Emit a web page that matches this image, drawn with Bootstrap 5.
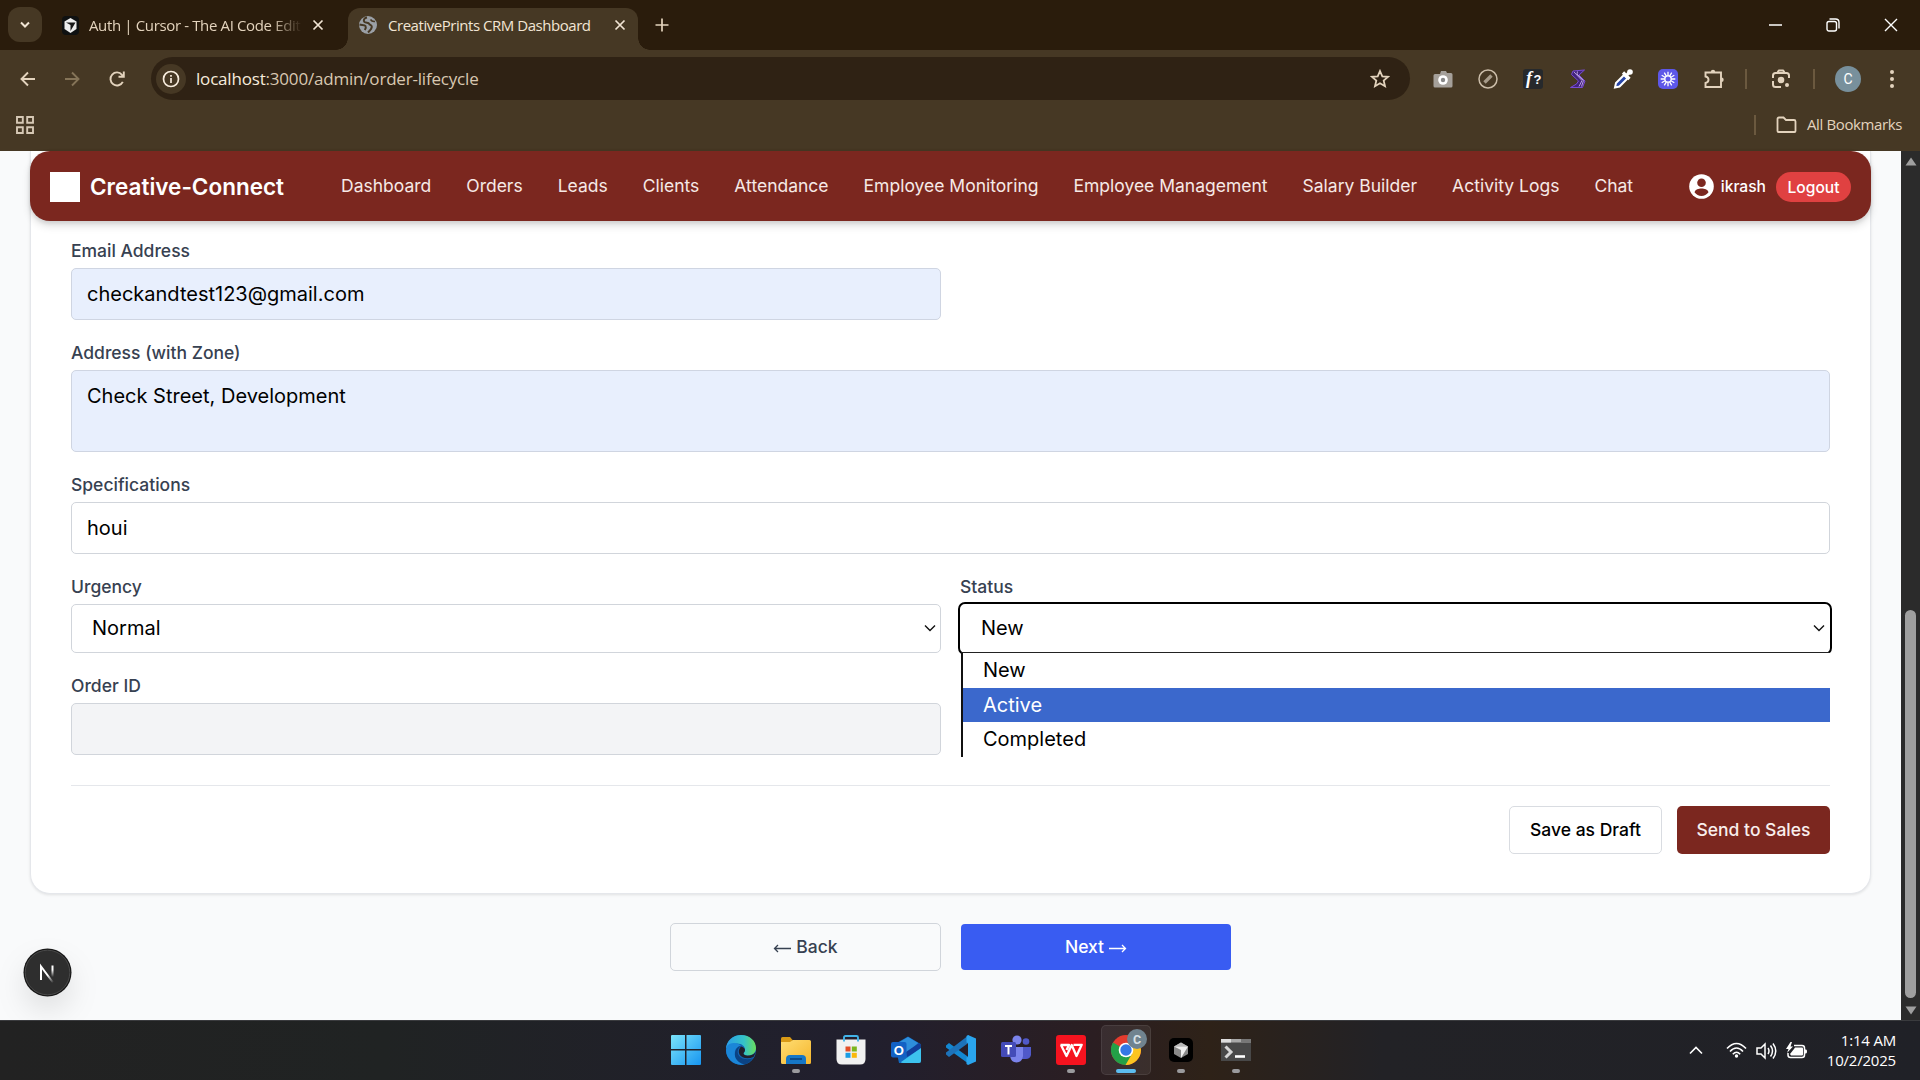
<!DOCTYPE html>
<html lang="en">
<head>
<meta charset="utf-8">
<title>CreativePrints CRM Dashboard</title>
<link href="https://cdn.jsdelivr.net/npm/bootstrap@5.3.0/dist/css/bootstrap.min.css" rel="stylesheet">
<style>
html,body{height:100%}
body{width:1920px;height:1080px;overflow:hidden;font-family:Inter,sans-serif;background:#f9fafb;color:#000}
svg{display:block;flex:none}
.chrome{height:151px;background:#463824;font-family:"Open Sans",sans-serif;color:#e3d3bd;flex:none}
.tabstrip{height:50px;background:#2a1c0c;padding-left:8px}
.tabsearch{width:34px;height:35px;border-radius:12px;background:#463824;margin-top:7px}
.tab-idle{width:289px;height:50px;padding-left:20px;font-size:15px;letter-spacing:-.36px}
.tab-idle .ttl{margin-left:10px;width:222px;white-space:nowrap;-webkit-mask-image:linear-gradient(90deg,#000 82%,transparent 96%)}
.tab-live{width:290px;height:42px;margin-top:8px;margin-left:17px;padding-bottom:8px;padding-left:10px;background:#463824;border-radius:12px 12px 0 0;position:relative;font-size:15px;letter-spacing:-.46px;color:#f2e5d4}
.tab-live .ttl{margin-left:10px;width:221px;white-space:nowrap}
.tab-live:before,.tab-live:after{content:"";position:absolute;bottom:0;width:12px;height:12px}
.tab-live:before{left:-12px;background:radial-gradient(circle at 0 0,transparent 11.5px,#463824 12px)}
.tab-live:after{right:-12px;background:radial-gradient(circle at 100% 0,transparent 11.5px,#463824 12px)}
.toolbar-row{height:57px}
.omni{width:1259px;height:43px;border-radius:22px;background:#2f2214;font-size:17px;padding-left:5px}
.omni .info{width:30px;height:30px;border-radius:50%;background:#463824}
.omni .url{margin-left:10px;letter-spacing:-.19px;color:#d9c8b1}
.omni b{font-weight:400;color:#f7ecdd}
.vsep{width:2px;height:20px;background:#6b593f}
.avatar-c{width:26px;height:26px;border-radius:50%;background:#78909c;color:#fff;font:14px Roboto,sans-serif;line-height:26px;text-align:center}
.bookmarks-txt{font-size:15px;letter-spacing:-.38px;margin-left:10px;width:113px;margin-top:-1px}
.viewport{height:869px;position:relative}
.page-col{width:1901px;background:#f9fafb}
.sheet{width:1841px;margin-left:30px;height:743px;background:#fff;border:1px solid #e5e7eb;border-top:0;border-radius:0 0 20px 20px;box-shadow:0 1px 3px rgba(0,0,0,.1)}
.topnav{height:70px;margin:0 -1px;background:#7b271f;border-radius:20px;box-shadow:0 5px 8px rgba(0,0,0,.12),0 2px 4px rgba(0,0,0,.1);padding:1px 20px 0;font-size:17.5px;font-weight:400;color:#f6e9e6;white-space:nowrap}
.logo-sq{width:30px;height:30px;background:#fff}
.brandname{font-size:22.5px;font-weight:600;color:#fff;width:251px;margin-left:10px}
.links{gap:35px}
.who{font-size:15.6px;font-weight:500;color:#fff}
.logout{background:#e04141;color:#fff;font-size:15.6px;font-weight:500;height:30px;width:75px;border-radius:15px;line-height:31px;text-align:center}
.formbody{padding:17px 40px 0 40px}
.lbl{font-size:17.5px;font-weight:500;line-height:25px;height:25px;margin-bottom:5px;color:#374151}
.fld{border:1px solid #d1d5db;border-radius:5px;height:52px;padding:0 15px;font-size:20px;display:flex;align-items:center;background:#fff}
.fld.auto{background:#e8effd;border-color:#cfd5e2}
.half{width:870px}
.sel{height:49px;padding-left:20px;padding-right:4px;padding-bottom:1px;justify-content:space-between}
.sel.on{outline:2.5px solid #000;outline-offset:0;border-color:#fff}
.menu-pop{position:absolute;left:961px;top:652px;width:869px;z-index:5;background:#fff;border-left:2px solid #111;border-top:1px solid #222;font-size:20px}
.menu-pop div{height:34.5px;line-height:35.5px;padding-left:20px}
.menu-pop .hot{background:#3b68cc;color:#fff}
.rule{height:1px;background:#e5e7eb;margin-top:30px}
.bt{height:48px;border-radius:5px;font-size:17.5px;font-weight:500;display:flex;align-items:center;justify-content:center;padding-top:1px}
.bt-draft{width:153px;border:1px solid #d9dce1;background:#fff;font-weight:450}
.bt-send{width:153px;background:#7b271f;color:#f8eeec;font-weight:450}
.bt-back{width:271px;border:1px solid #d1d5db;color:#374151}
.bt-next{width:270px;height:46px;background:#395cf2;color:#fff;border-radius:4px}
.scrollcol{width:19px;background:#2b2b2b}
.thumb{width:11px;height:388px;border-radius:6px;background:#9f9f9f}
.nbadge{position:absolute;left:23px;top:797px;filter:drop-shadow(0 14px 14px rgba(0,0,0,.1))}
.taskbar{height:60px;background:linear-gradient(90deg,#222 0,#202323 20%,#211f2e 45%,#2b1e22 57%,#2e2218 63%,#222226 72%,#202127);border-top:1px solid #3a3b3e;color:#fff;padding-left:658px;position:relative}
.tk{width:55px;height:59px;position:relative;display:flex;justify-content:center;padding-top:14px}
.tk .run{position:absolute;top:48px;width:8px;height:4px;border-radius:2px;background:#9a9a9d}
.tk.act:before{content:"";position:absolute;left:2.5px;top:4px;width:50px;height:50px;border-radius:5px;background:rgba(255,255,255,.07);border:1px solid rgba(255,255,255,.08)}
.tk.act .run{width:20px;background:#5cbdf0}
.tray{margin-left:auto;padding-right:24px;font-family:"Open Sans",sans-serif}
.clock{font-size:15px;line-height:20px;text-align:right;width:72px;letter-spacing:-.2px;white-space:nowrap;margin-top:-2px;margin-left:17px}
</style>
</head>
<body class="d-flex flex-column">
<header class="chrome">
  <div class="tabstrip d-flex">
    <div class="tabsearch d-flex align-items-center justify-content-center"><svg width="12" height="12" fill="none" stroke="#f2e5d4" stroke-width="2"><path d="M2 3.500l4 4 4-4"/></svg></div>
    <div class="tab-idle d-flex align-items-center">
      <svg width="17" height="19" viewBox="0 0 17 19"><rect width="17" height="19" rx="4" fill="#0f1112"/><path d="M8.500 2L14.500 5.500v7.500L8.500 17 2.500 13V5.500z" fill="#eee"/><path d="M4 6.500h9.500L8.500 15V9z" fill="#181818"/></svg>
      <span class="ttl">Auth | Cursor - The AI Code Edit</span>
      <svg width="14" height="14" stroke="#f2e5d4" stroke-width="1.700"><path d="M2.500 2.500l9 9m0-9l-9 9"/></svg>
    </div>
    <div class="tab-live d-flex align-items-center">
      <svg width="20" height="20" viewBox="0 0 20 20"><circle cx="10" cy="10" r="9" fill="#9ba0a6"/><path d="M9 2.500C6 3 5 5.500 6.500 7c1.500 1.200 4 .3 4.700 1.800.5 1.400 2.600 1 2.600 3 0 2.200-2.300 4.200-3.800 5.700M1.500 9.500c2 .8 5 0 6 1.500.6 1 .3 2.500-.7 4" fill="none" stroke="#463824" stroke-width="2"/><path d="M12.500 4.500q1.500 2.500 4.500 2" stroke="#463824" stroke-width="1.500" fill="none"/></svg>
      <span class="ttl">CreativePrints CRM Dashboard</span>
      <svg class="ms-1" width="14" height="14" stroke="#f2e5d4" stroke-width="1.700"><path d="M2.500 2.500l9 9m0-9l-9 9"/></svg>
    </div>
    <svg style="margin:17px 0 0 16px" width="16" height="16" stroke="#e3d3bd" stroke-width="1.700"><path d="M8 1.500v13M1.500 8h13"/></svg>
    <div class="d-flex align-items-center ms-auto" style="gap:44px;height:50px;padding-right:22px">
      <svg width="13" height="14" stroke="#fff" stroke-width="1.500"><path d="M0 7h13"/></svg>
      <svg width="14" height="14" viewBox="0 0 14 14" fill="none" stroke="#fff" stroke-width="1.400"><rect x="1" y="3.500" width="9.500" height="9.500" rx="2"/><path d="M3.500 1h6q3.500 0 3.500 3.500v6"/></svg>
      <svg width="14" height="14" stroke="#fff" stroke-width="1.400"><path d="M1 1l12 12m0-12L1 13"/></svg>
    </div>
  </div>
  <div class="toolbar-row d-flex align-items-center">
    <svg style="margin-left:20px" width="15" height="16" fill="none" stroke="#e3d3bd" stroke-width="1.900"><path d="M15 8H1.500M8 1.500L1.500 8 8 14.500"/></svg>
    <svg style="margin-left:30px" width="15" height="16" fill="none" stroke="#857458" stroke-width="1.900"><path d="M0 8h13.500M7 1.500L13.500 8 7 14.500"/></svg>
    <svg style="margin-left:28px" width="18" height="18" viewBox="0 0 18 18" fill="none" stroke="#e3d3bd" stroke-width="1.900"><path d="M14.800 11.800A6.500 6.500 0 1 1 14 4.800L15.500 6.500M15.800 1.500v5.300h-5.300"/></svg>
    <div class="omni d-flex align-items-center" style="margin-left:25px">
      <span class="info d-flex align-items-center justify-content-center"><svg width="18" height="18" fill="none" stroke="#f7ecdd" stroke-width="1.700"><circle cx="9" cy="9" r="7.500"/><path d="M9 8v5M9 5v1.800"/></svg></span>
      <span class="url"><b>localhost</b>:3000/admin/order-lifecycle</span>
      <svg class="ms-auto" style="margin-right:20px" width="20" height="20" viewBox="0 0 20 20" fill="none" stroke="#e3d3bd" stroke-width="1.800"><path d="M10 2l2.300 5.300 5.700.5-4.300 3.800 1.300 5.600-5-3-5 3 1.300-5.600L2 7.800l5.700-.5z"/></svg>
    </div>
    <svg style="margin-left:23px" width="20" height="20" viewBox="0 0 20 20"><path d="M2 5h5l1-3h5l1 2h4a1.500 1.500 0 0 1 1.500 1.500V17a1.500 1.500 0 0 1-1.500 1.500H2A1.500 1.500 0 0 1 .500 17V6.500A1.500 1.500 0 0 1 2 5z" fill="#a5a09a"/><circle cx="10" cy="11" r="4.800" fill="#fff"/><circle cx="10" cy="11" r="2.200" fill="#888"/></svg>
    <svg style="margin-left:25px" width="20" height="20" fill="none" stroke="#a79b8a"><circle cx="10" cy="10" r="9" stroke-width="1.500" stroke="#cbbda9"/><path d="M6.500 13.500l7-7" stroke-width="3.400"/></svg>
    <svg style="margin-left:25px" width="20" height="20"><rect width="20" height="20" rx="3" fill="#26292c"/><text x="3" y="15" font-family="Liberation Serif,serif" font-style="italic" font-weight="bold" font-size="18" fill="#fff">f</text><text x="10.500" y="15" font-family="Liberation Sans,sans-serif" font-weight="bold" font-size="13" fill="#fff">?</text></svg>
    <svg style="margin-left:26px" width="18" height="20" viewBox="0 0 18 20" fill="none"><path d="M15.500 1L4 2 2.500 5.500l7 6.500-2 3L1.500 18.500h12l2.500-6.500-6-6z" fill="#41237c" stroke="#7a4bd6" stroke-width="1"/><path d="M5 3l8 8.500-3 6M8.500 2.500L8 5l6.500 6.500-2 6" stroke="#b79be0"/></svg>
    <svg style="margin-left:25px" width="22" height="22" viewBox="0 0 22 22"><path d="M3 19.500l1-4.500 8-8 3.500 3.500-8 8z" fill="#2745a8" stroke="#fff" stroke-width="2"/><path d="M11 4.500l6.500 6.500M14 8l4-4.500" stroke="#fff" stroke-width="3.200"/><circle cx="18" cy="4" r="2.800" fill="#fff"/></svg>
    <svg style="margin-left:24px" width="20" height="20"><rect width="20" height="20" rx="5" fill="#5d57e8"/><path d="M10 2.700v14.600M2.700 10h14.600M6.300 3.700l7.400 12.600M13.700 3.700L6.300 16.300M3.700 6.300l12.600 7.400M3.700 13.700l12.600-7.400" stroke="#fff" stroke-width="1.300"/><circle cx="10" cy="10" r="3.700" fill="#fff"/><circle cx="10" cy="10" r="2.500" fill="#5d57e8"/></svg>
    <svg style="margin-left:25px" width="22" height="22" viewBox="0 0 22 22" fill="none" stroke="#e3d3bd" stroke-width="1.900"><path d="M2.500 4.500H18V19H2.500v-4q3-.8 3-3.300t-3-3.200z"/><path d="M7.800 4a2.200 2.200 0 0 1 4.400 0zM18.500 9.500a2.200 2.200 0 0 1 0 4.400z" fill="#e3d3bd" stroke="none"/></svg>
    <div class="vsep" style="margin-left:20px"></div>
    <svg style="margin-left:24px" width="20" height="20" viewBox="0 0 20 20" fill="none" stroke="#e3d3bd" stroke-width="2"><path d="M2 9V6.500Q2 4 4.500 4h11Q18 4 18 6.500V9M2 12v3.500Q2 18 4.500 18H10M6.500 3.200L8 1.500h4l1.500 1.700"/><circle cx="10" cy="11" r="3.300" fill="#e3d3bd" stroke="none"/><circle cx="16" cy="16" r="2" fill="#e3d3bd" stroke="none"/></svg>
    <div class="vsep" style="margin-left:22px"></div>
    <div class="avatar-c" style="margin-left:20px">C</div>
    <svg style="margin-left:28px" width="6" height="20" fill="#e3d3bd"><circle cx="3" cy="3" r="2"/><circle cx="3" cy="10" r="2"/><circle cx="3" cy="17" r="2"/></svg>
  </div>
  <div class="d-flex align-items-center" style="height:36px">
    <svg style="margin-left:16px" width="18" height="18" fill="none" stroke="#d6c8b5" stroke-width="1.900"><path d="M1 1h5.800v5.800H1zM11.200 1H17v5.800h-5.800zM1 11.200h5.800V17H1zM11.200 11.200H17V17h-5.800z"/></svg>
    <div class="vsep ms-auto"></div>
    <svg style="margin-left:20px" width="21" height="18" fill="none" stroke="#e3d3bd" stroke-width="1.800"><path d="M1.500 15V3q0-1.500 1.500-1.500h4.500L10 4h8q1.500 0 1.500 1.500V15q0 1-1 1h-16q-1 0-1-1z"/></svg>
    <span class="bookmarks-txt text-nowrap">All Bookmarks</span>
  </div>
</header>

<main class="viewport d-flex flex-shrink-0">
  <div class="page-col">
    <div class="sheet">
      <nav class="topnav d-flex align-items-center">
        <span class="logo-sq"></span><span class="brandname">Creative-Connect</span>
        <div class="links d-flex"><span>Dashboard</span><span>Orders</span><span>Leads</span><span>Clients</span><span>Attendance</span><span>Employee Monitoring</span><span>Employee Management</span><span>Salary Builder</span><span>Activity Logs</span><span>Chat</span></div>
        <svg class="ms-auto" width="25" height="25" viewBox="0 0 25 25"><circle cx="12.500" cy="12.500" r="12.300" fill="#fff"/><circle cx="12.500" cy="8.800" r="4.300" fill="#7b271f"/><path d="M5.500 18.200c1-3 4-3.700 7-3.700s6 .7 7 3.700c-1.700 2.400-4.300 3.700-7 3.700s-5.300-1.300-7-3.700z" fill="#7b271f"/></svg>
        <span class="who" style="margin:0 10px 0 7px">ikrash</span><span class="logout">Logout</span>
      </nav>
      <div class="formbody">
        <div class="lbl">Email Address</div>
        <div class="fld auto half">checkandtest123@gmail.com</div>
        <div class="lbl" style="margin-top:20px">Address (with Zone)</div>
        <div class="fld auto align-items-start" style="height:82px;padding-top:10px">Check Street, Development</div>
        <div class="lbl" style="margin-top:20px">Specifications</div>
        <div class="fld">houi</div>
        <div class="d-flex" style="margin-top:20px;gap:19px">
          <div class="half"><div class="lbl">Urgency</div><div class="fld sel">Normal<svg width="12" height="8" fill="none" stroke="#111" stroke-width="1.400"><path d="M1 1.500l5 5 5-5"/></svg></div></div>
          <div class="half"><div class="lbl">Status</div><div class="fld sel on">New<svg width="12" height="8" fill="none" stroke="#111" stroke-width="1.400"><path d="M1 1.500l5 5 5-5"/></svg></div></div>
        </div>
        <div class="lbl" style="margin-top:20px">Order ID</div>
        <div class="fld half" style="background:#f3f4f6"></div>
        <div class="rule"></div>
        <div class="d-flex justify-content-end" style="margin-top:20px;gap:15px"><div class="bt bt-draft">Save as Draft</div><div class="bt bt-send">Send to Sales</div></div>
      </div>
    </div>
    <div class="d-flex justify-content-center align-items-center" style="margin-top:29px;gap:20px">
      <div class="bt bt-back"><svg style="margin-right:5px" width="18" height="12" fill="none" stroke="#374151" stroke-width="1.300"><path d="M18 6.500H1.500M5 3L1.500 6.500 5 10"/></svg>Back</div>
      <div class="bt bt-next">Next<svg style="margin-left:5px" width="18" height="12" fill="none" stroke="#fff" stroke-width="1.300"><path d="M0 6.500h16.500M13 3l3.500 3.500L13 10"/></svg></div>
    </div>
  </div>
  <div class="scrollcol d-flex flex-column align-items-center">
    <svg style="margin-top:6px" width="12" height="9"><path d="M6 .5L11.500 8.500H.500z" fill="#9f9f9f"/></svg>
    <div class="thumb" style="margin-top:444px"></div>
    <svg style="margin-top:8px" width="12" height="9"><path d="M6 8.500L11.500.500H.500z" fill="#9f9f9f"/></svg>
  </div>
  <svg class="nbadge" width="49" height="49" viewBox="0 0 49 49"><defs><linearGradient id="nf" gradientUnits="userSpaceOnUse" x1="0" y1="17" x2="0" y2="29"><stop offset=".4" stop-color="#fff"/><stop offset="1" stop-color="#fff" stop-opacity="0"/></linearGradient><linearGradient id="nd" gradientUnits="userSpaceOnUse" x1="22" y1="24" x2="31" y2="34"><stop offset=".3" stop-color="#fff"/><stop offset="1" stop-color="#fff" stop-opacity="0"/></linearGradient></defs><circle cx="24.500" cy="24.500" r="24" fill="#171717"/><circle cx="24.500" cy="24.500" r="22.300" fill="#2e2e2e" stroke="#4a4a4a"/><path d="M18 32V18.500L30 34.500" fill="none" stroke="url(#nd)" stroke-width="2"/><path d="M29.500 17.500v12" stroke="url(#nf)" stroke-width="2"/></svg>
</main>
<div class="menu-pop"><div>New</div><div class="hot">Active</div><div>Completed</div></div>

<footer class="taskbar d-flex flex-shrink-0">
  <svg width="0" height="0" class="position-absolute"><defs>
    <linearGradient id="wn" x1="0" y1="0" x2="1" y2="1"><stop stop-color="#7be4fb"/><stop offset="1" stop-color="#1795f0"/></linearGradient>
    <linearGradient id="ed" x1="0" y1="0" x2="1" y2="0"><stop stop-color="#2b9ee8"/><stop offset=".6" stop-color="#35c3c8"/><stop offset="1" stop-color="#6ade5c"/></linearGradient>
    <linearGradient id="fo" x1="0" y1="0" x2="1" y2="1"><stop stop-color="#ffdd73"/><stop offset="1" stop-color="#f5b62c"/></linearGradient></defs></svg>
  <div class="tk"><svg width="30" height="30" fill="url(#wn)"><path d="M0 1q0-1 1-1h13v14H0zM15.500 0H29q1 0 1 1v13H15.500zM0 15.500h14V30H1q-1 0-1-1zM15.500 15.500H30V29q0 1-1 1H15.500z"/></svg></div>
  <div class="tk"><svg width="30" height="30" viewBox="0 0 30 30"><circle cx="15" cy="15" r="15" fill="#1464b4"/><path d="M0 14C0 6 7 0 15 0c9 0 15 6 15 13 0 5-4 7.500-8 7.500-3 0-4.500-1-4.500-2 0-1 1.500-1.500 1.500-4 0-3-3-6-8-6-6 0-10 3-11 5.500z" fill="url(#ed)"/><path d="M1 11C4 7 12 7 15 11c-4 0-7 4-6 9 .8 5 5 9 10 9.500C10 31.500 0 25 0 15z" fill="#1b86d8"/><path d="M15 11c-3 2-4 5-3 8 2 5 9 6.500 15 4-2.500 3.500-5 5.500-8 6.500C12 28 8 23 9 18c.5-4 3-7 6-7z" fill="#0b4384"/><path d="M19 15c0 2-1.500 2.500-1.500 3.500 0 1.500 3 2.500 6 2 3-.4 5-2 6.500-3.500l-2.500 5c-6 2.500-12 1-14-2.500-1.500-3-.5-6 1.500-8 2 .5 4 1.500 4 3.500z" fill="#211f2a"/></svg></div>
  <div class="tk"><svg width="30" height="30" viewBox="0 0 30 30"><path d="M0 3.500Q0 2 1.500 2H9l3 3.500-3 3H0z" fill="#d99a16"/><path d="M0 7h9l3-2h16.500Q30 5 30 6.500V27.500q0 1.500-1.500 1.500h-27Q0 29 0 27.500z" fill="url(#fo)"/><path d="M5 29v-5q0-4 4-4h12q4 0 4 4v5z" fill="#1677c6"/><path d="M9 24h12" stroke="#0a4c8c" stroke-width="2"/></svg><i class="run"></i></div>
  <div class="tk"><svg width="30" height="30" viewBox="0 0 30 30"><path d="M.500 4.500h29V24q0 5.500-5.500 5.500H6Q.500 29.500.500 24z" fill="#f1f1f1"/><path d="M8 6.500V2.500Q8 1 9.500 1h11Q22 1 22 2.500v4" fill="none" stroke="#42b3e8" stroke-width="1.900"/><path d="M9.500 11.500h5v5h-5z" fill="#e24e28"/><path d="M15.800 11.500h5v5h-5z" fill="#7bb51c"/><path d="M9.500 17.800h5v5h-5z" fill="#1b9de4"/><path d="M15.800 17.800h5v5h-5z" fill="#fab80c"/></svg></div>
  <div class="tk"><svg width="30" height="30" viewBox="0 0 30 30"><path d="M4 9L17 1.500 29.500 9v18Q29.500 28 28 28H8z" fill="#1268c0"/><path d="M7 8l10-6 10 6-9 9H7z" fill="#2e8fdc"/><path d="M15 17L28 8l1.500 1.500V14L16 22z" fill="#113f9c"/><path d="M10 27L30 13v13q0 2-2 2H12q-2 0-2-1z" fill="#3dc3ee"/><rect y="7" width="15.500" height="15.500" rx="2" fill="#1261c4"/><text x="7.700" y="19.500" text-anchor="middle" font-family="Liberation Sans,sans-serif" font-size="13" font-weight="bold" fill="#fff">O</text></svg></div>
  <div class="tk"><svg width="30" height="30" viewBox="0 0 30 30"><path d="M0 10.500L3 8 23 22.500V29L0 12.500z" fill="#1388d2"/><path d="M0 19.500L3 22 23 7.500V0L0 17.500z" fill="#1d73ba"/><path d="M22 0l8 3.500v23L22 30l-1.500-1V22.500L22 22V8l-1.500-.5V1z" fill="#2aa5ee"/></svg></div>
  <div class="tk"><svg width="30" height="30" viewBox="0 0 30 30"><circle cx="25" cy="6.500" r="3.300" fill="#5059c9"/><path d="M21 12h9v8q-1 4-5 4h-4z" fill="#5059c9"/><circle cx="16" cy="5" r="4.600" fill="#7b83eb"/><path d="M9 12h13v9q-1 6.500-6.500 6.500T9 21z" fill="#7b83eb"/><rect y="7" width="15" height="15" rx="1.500" fill="#444bb8"/><path d="M4 11h7M7.500 11v8.500" stroke="#fff" stroke-width="2"/></svg></div>
  <div class="tk"><svg width="30" height="30" viewBox="0 0 30 30"><rect width="30" height="30" rx="3" fill="#f5131f"/><path d="M4.500 10h8.500l-2.500 5M5 10l5.500 11L15.700 10l4.800 11L25.700 9.800H17.500" fill="none" stroke="#fff" stroke-width="2.300" stroke-linejoin="round"/></svg><i class="run"></i></div>
  <div class="tk act"><svg width="30" height="30" viewBox="0 0 30 30" class="position-relative"><circle cx="15" cy="15" r="15" fill="#e33b2e"/><path d="M15 15L2 7.500A15 15 0 0 0 15 30l6.500-11z" fill="#23a047"/><path d="M15 15h15A15 15 0 0 1 14.500 30l7-12z" fill="#fcc521"/><path d="M15 8h13A15 15 0 0 1 30 15l-9 4z" fill="#fcc521"/><circle cx="15" cy="15" r="7.300" fill="#fff"/><circle cx="15" cy="15" r="5.700" fill="#3478e5"/></svg><svg width="20" height="20" style="position:absolute;left:29px;top:8px"><circle cx="10" cy="10" r="10" fill="#70838f"/><text x="10" y="14.500" text-anchor="middle" font-family="Roboto,sans-serif" font-size="12.500" font-weight="bold" fill="#d8e0e5">C</text></svg><i class="run"></i></div>
  <div class="tk"><svg style="margin-top:3px" width="24" height="24" viewBox="0 0 24 24"><rect width="24" height="24" rx="5" fill="#000"/><path d="M12 4.500l7 4v7.500l-7 4-7-4V8.500z" fill="#898989"/><path d="M12 4.500l7 4H5z" fill="#b8b8b8"/><path d="M5 8.500h14L12 20v-8z" fill="#eee"/></svg><i class="run"></i></div>
  <div class="tk"><svg style="margin-top:4px" width="30" height="22"><rect width="30" height="22" fill="#484848"/><path d="M0 0h30v3.500H0z" fill="#a8a8a8"/><path d="M0 0h10v3.500H0z" fill="#ddd"/><path d="M20 0h10v3.500H20z" fill="#777"/><path d="M4.500 7.500l5.500 5.500-5.500 5.500" fill="none" stroke="#d6d6d6" stroke-width="3"/><path d="M14 17.500h10" stroke="#fff" stroke-width="2.600"/></svg><i class="run"></i></div>
  <div class="tray d-flex align-items-center">
    <svg width="14" height="9" fill="none" stroke="#fff" stroke-width="1.600"><path d="M1 7.500l6-6 6 6"/></svg>
    <svg style="margin-left:23px" width="21" height="17" viewBox="0 0 21 17" fill="none" stroke="#fff" stroke-width="1.600"><path d="M1 6.500q9.500-10 19 0M4 9.500q6.500-7 13 0M6.800 12.200q3.700-4 7.400 0"/><circle cx="10.500" cy="14" r="1.700" fill="#fff" stroke="none"/></svg>
    <svg style="margin-left:9px" width="21" height="18" viewBox="0 0 21 18" fill="none" stroke="#fff" stroke-width="1.500"><path d="M1 6h4l4-4v14l-4-4H1zM12 6q2 3 0 6M14.500 3.500q4 5.500 0 11M17 1.500q5.500 7.500 0 15"/></svg>
    <svg style="margin-left:9px" width="21" height="18" viewBox="0 0 21 18"><path d="M8 3.500h8q2.500 0 2.500 2.500v7q0 2.500-2.500 2.500H4.500Q2 15.500 2 13v-2" fill="none" stroke="#fff" stroke-width="1.500"/><path d="M9 5.500h7q1 0 1 1v6q0 1-1 1H5l-1-1.500L8 7zM19 7.500h1q1 0 1 2t-1 2h-1zM4.500 0L0 7h2.500L1 11l6-6.500H4.500L6 0z" fill="#fff"/></svg>
    <div class="clock">1:14 AM<br>10/2/2025</div>
  </div>
</footer>
<script src="https://cdn.jsdelivr.net/npm/bootstrap@5.3.0/dist/js/bootstrap.bundle.min.js"></script>
</body>
</html>
